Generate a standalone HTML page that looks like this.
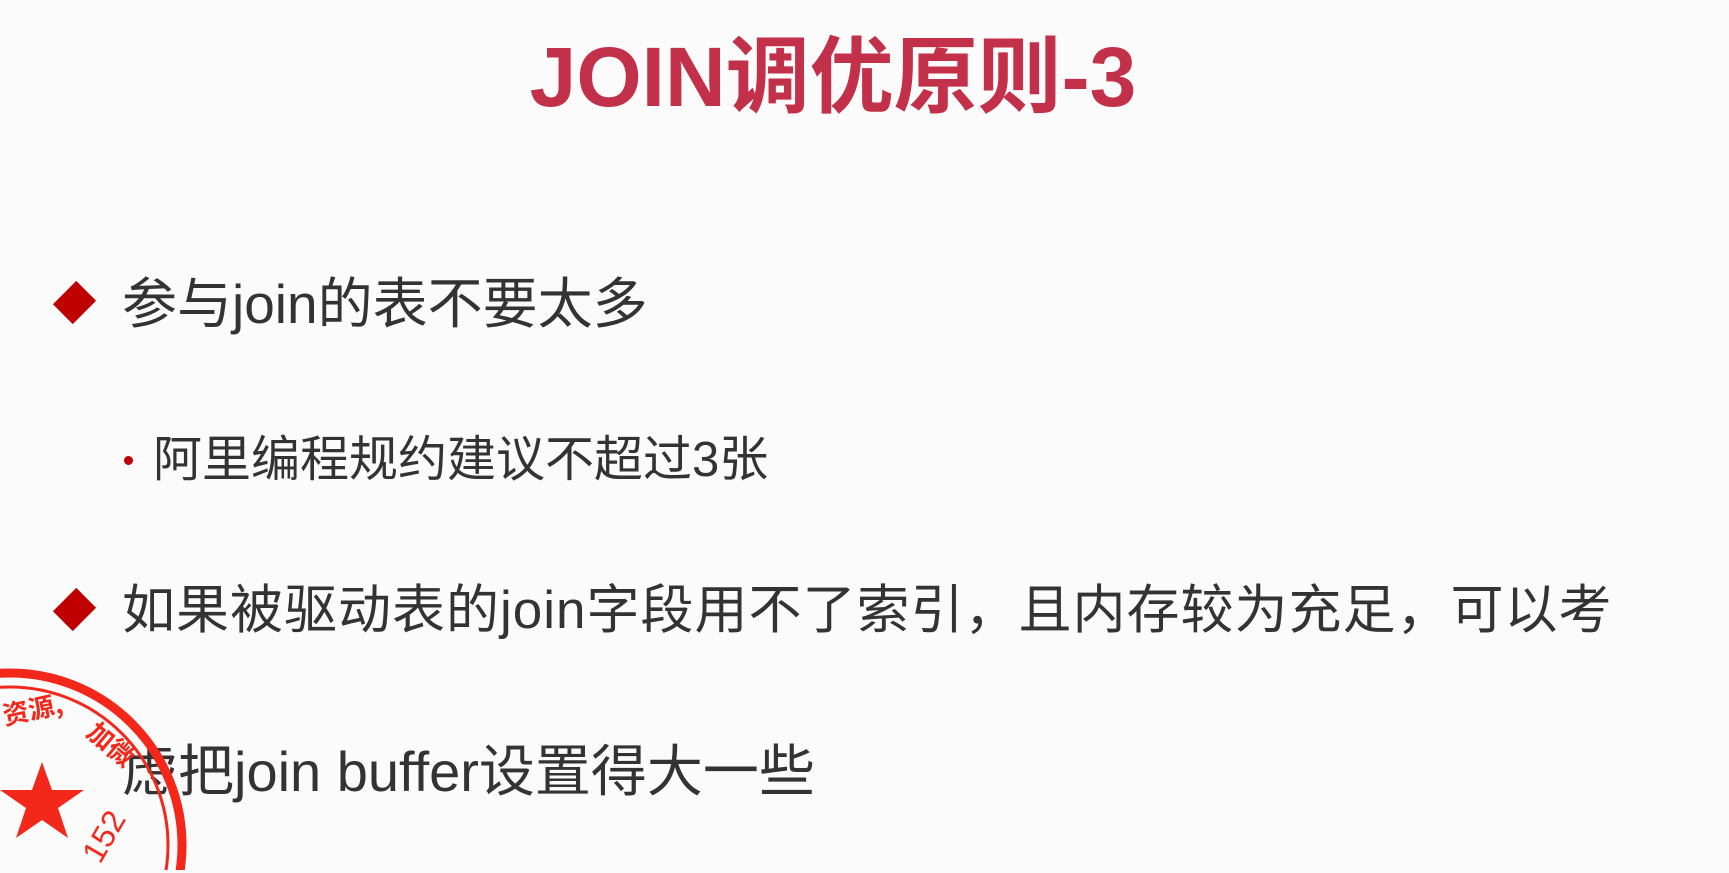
<!DOCTYPE html>
<html><head><meta charset="utf-8"><style>
html,body{margin:0;padding:0;width:1729px;height:873px;overflow:hidden;background:#fbfbfb;position:relative;font-family:"Liberation Sans","Noto Sans CJK SC",sans-serif;}
.t{position:absolute;white-space:nowrap;color:#333;line-height:1.2;}
h1{position:absolute;margin:0;left:0;width:1666px;text-align:center;top:27px;font-size:84px;line-height:1.2;font-weight:bold;color:#c3304a;font-family:"Liberation Sans","Noto Sans CJK SC",sans-serif;white-space:nowrap;}
.d{position:absolute;width:33px;height:33px;background:#c00000;transform:rotate(45deg) scaleX(0.85);}
</style></head><body>
<h1>JOIN调优原则-3</h1>
<div class="d" style="left:58px;top:286px"></div>
<div class="t" style="left:122px;top:271px;font-size:55px;">参与join的表不要太多</div>
<div style="position:absolute;left:124px;top:456px;width:9px;height:9px;border-radius:50%;background:#c00000"></div>
<div class="t" style="left:153px;top:431px;font-size:49px;">阿里编程规约建议不超过3张</div>
<div class="d" style="left:58px;top:593px"></div>
<div class="t" style="left:122px;top:579px;font-size:53px;letter-spacing:1px">如果被驱动表的join字段用不了索引，且内存较为充足，可以考</div>
<div class="t" style="left:122px;top:738px;font-size:56px;">虑把join buffer设置得大一些</div>
<svg style="position:absolute;left:0;top:640px" width="300" height="230">
<circle cx="10" cy="205" r="172" fill="none" stroke="#f4271b" stroke-width="9"/>
<circle cx="10" cy="205" r="158" fill="none" stroke="#f4271b" stroke-width="3"/>
<polygon points="42,122 52,150 84,150 58,168 68,198 42,180 16,198 26,168 0,150 32,150" fill="#f4271b"/>
<text x="5" y="85" font-size="26" fill="#f4271b" font-weight="bold" font-family="Noto Sans CJK SC" transform="rotate(-12 5 85)">资源,</text>
<text x="85" y="95" font-size="26" fill="#f4271b" font-weight="bold" font-family="Noto Sans CJK SC" transform="rotate(40 85 95)">加微</text>
<text x="100" y="225" font-size="32" fill="#f4271b" font-family="Liberation Sans" transform="rotate(-60 100 225)">152</text>
</svg>
</body></html>
